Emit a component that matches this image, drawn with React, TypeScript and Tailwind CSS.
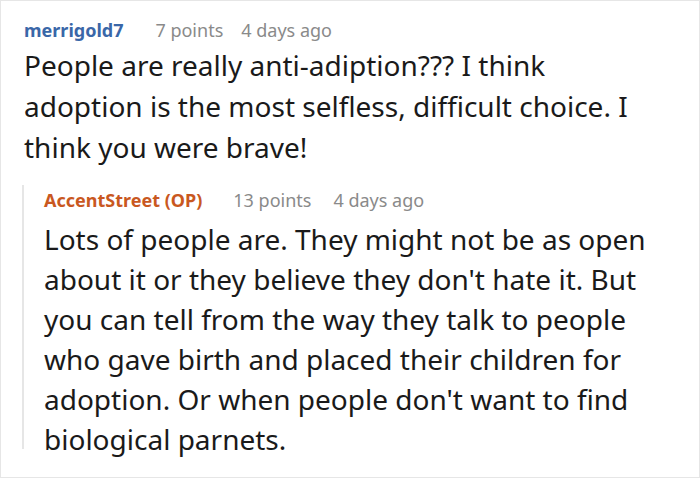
export default function App() {
  return (
    <div
      className="w-[700px] h-[478px] bg-white border border-[#e6e6e6] overflow-hidden text-[#1a1a1a]"
      style={{ fontFamily: '"Noto Sans", "Open Sans", sans-serif' }}
    >
      <div className="pl-[23px] pt-[16px] pr-4">
        <div className="flex items-baseline text-[18px] leading-[26px]">
          <span className="font-bold text-[#3a67a8]">merrigold7</span>
          <span className="ml-[32px] text-[#8a8a8a]">7 points</span>
          <span className="ml-[18px] text-[#8a8a8a]">4 days ago</span>
        </div>
        <p className="mt-[2px] text-[28px] leading-[41px] w-[640px]">
          People are really anti-adiption??? I think adoption is the most selfless, difficult choice. I think you were brave!
        </p>
      </div>
      <div className="mt-[17px] ml-[21px] border-l-2 border-[#e6e6e6] pl-[20px] pt-[2px] h-[264px]">
        <div className="flex items-baseline text-[18px] leading-[26px]">
          <span className="font-bold text-[#c9581f]">AccentStreet (OP)</span>
          <span className="ml-[31px] text-[#8a8a8a]">13 points</span>
          <span className="ml-[22px] text-[#8a8a8a]">4 days ago</span>
        </div>
        <p className="mt-[6px] text-[28px] leading-[40px] w-[620px]">
          Lots of people are. They might not be as open about it or they believe they don't hate it. But you can tell from the way they talk to people who gave birth and placed their children for adoption. Or when people don't want to find biological parnets.
        </p>
      </div>
    </div>
  );
}
